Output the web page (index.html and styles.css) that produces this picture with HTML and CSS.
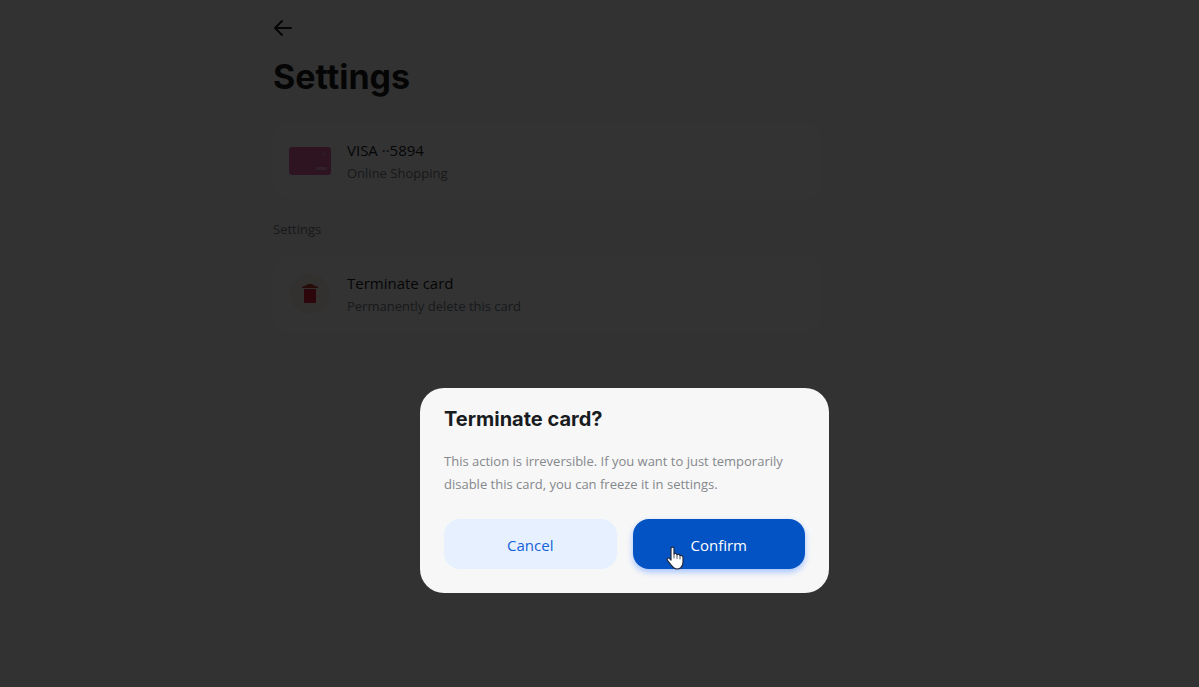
FILE: index.html
```
<!DOCTYPE html>
<html lang="en">
<head>
    <meta charset="UTF-8">
    <meta name="viewport" content="width=device-width, initial-scale=1.0">
    <title>Settings</title>
    <link rel="stylesheet" href="styles.css">
</head>
<body>

    <main class="page">
        <button class="back" type="button" aria-label="Back">
            <svg width="20" height="20" viewBox="0 0 20 20" fill="none" stroke="currentColor" stroke-width="2" stroke-linecap="round" stroke-linejoin="round">
                <path d="M9 3 L2 10 L9 17 M2 10 H18"/>
            </svg>
        </button>
        <h1>Settings</h1>

        <a class="card" href="#">
            <svg class="card-icon" width="42" height="28" viewBox="0 0 42 28">
                <rect width="42" height="28" rx="3" fill="#e0669f"/>
                <circle cx="35" cy="7" r="2" fill="#ea8bb6"/>
                <rect x="27" y="20" width="11" height="3" rx="1" fill="#f3a9ca"/>
            </svg>
            <span class="card-text">
                <span class="card-title">VISA ··5894</span>
                <span class="card-sub">Online Shopping</span>
            </span>
        </a>

        <h2>Settings</h2>

        <button class="card" type="button">
            <svg class="card-icon" width="42" height="40" viewBox="0 0 42 40">
                <circle cx="21" cy="20" r="20" fill="#fdf1f1"/>
                <path d="M13 13 L18 11 L19 10 H23 L24 11 L29 13 V14 H13 Z" fill="#c0392b"/>
                <path d="M15 15 H27 V28 Q27 29 26 29 H16 Q15 29 15 28 Z" fill="#e0203a"/>
            </svg>
            <span class="card-text">
                <span class="card-title">Terminate card</span>
                <span class="card-sub">Permanently delete this card</span>
            </span>
        </button>
    </main>

    <div class="overlay">
        <div class="dialog" role="dialog" aria-modal="true" aria-labelledby="dialogTitle">
            <h3 id="dialogTitle">Terminate card?</h3>
            <p>This action is irreversible. If you want to just temporarily disable this card, you can freeze it in settings.</p>
            <div class="actions">
                <button class="btn btn-cancel" type="button">Cancel</button>
                <button class="btn btn-confirm" type="button">Confirm
                    <svg class="pointer" width="18" height="24" viewBox="0 0 18 24" aria-hidden="true">
                        <path d="M5 2.5 C5 .6 8 .6 8 2.5 V8 C8.6 7.1 10.8 7.3 11 8.7 C11.8 7.9 13.8 8.3 14 9.7 C15 9.1 17 9.6 17 11.4 V16.5 C17 19 16 20.5 14.5 22 C13 23.3 9.5 23.3 8 22 C5.5 20 3.5 17 1.5 14.3 C.3 12.5 2.3 11.3 3.6 12.6 L5 14 Z" fill="#fff" stroke="#222b3d" stroke-width="1.2" stroke-linejoin="round"/>
                        <path d="M8 8 V12 M11 9 V12.5 M14 10 V13" stroke="#222b3d" stroke-width="0.8" stroke-linecap="round"/>
                    </svg>
                </button>
            </div>
        </div>
    </div>

</body>
</html>
```
FILE: styles.css
```
* {
    box-sizing: border-box;
}

body {
    margin: 0;
    background-color: #f7f7f7;
    color: #191c1f;
    font-family: "Open Sans", "Noto Sans", sans-serif;
}

button {
    font-family: inherit;
    border: none;
    cursor: pointer;
}

.page {
    max-width: 821px;
    padding: 18px 0 0 273px;
}

.back {
    display: block;
    height: 20px;
    padding: 0;
    background: none;
    color: #191c1f;
}

h1 {
    margin: 17px 0 24px;
    font-family: Inter, sans-serif;
    font-size: 34px;
    line-height: 44px;
    font-weight: 700;
}

h2 {
    margin: 20px 0 17px;
    color: #75808a;
    font-size: 13px;
    line-height: 20px;
    font-weight: 400;
}

.card {
    display: flex;
    align-items: center;
    gap: 16px;
    width: 100%;
    min-height: 76px;
    padding: 12px 16px;
    border-radius: 16px;
    background-color: #fff;
    color: #191c1f;
    text-align: left;
    text-decoration: none;
}

.card-icon {
    flex-shrink: 0;
}

.card-text {
    display: flex;
    flex-direction: column;
}

.card-title {
    font-size: 15px;
    line-height: 24px;
}

.card-sub {
    color: #75808a;
    font-size: 13px;
    line-height: 22px;
}

.overlay {
    position: fixed;
    inset: 0;
    display: flex;
    align-items: flex-end;
    justify-content: center;
    padding: 0 0 94px 50px;
    background-color: rgba(0, 0, 0, 0.8);
}

.dialog {
    width: 100%;
    max-width: 409px;
    padding: 16px 24px 24px;
    border-radius: 24px;
    background-color: #f7f7f7;
}

.dialog h3 {
    margin: 0 0 16px;
    font-family: Inter, sans-serif;
    font-size: 20px;
    line-height: 30px;
    font-weight: 700;
}

.dialog p {
    margin: 0 0 23px;
    color: #85888c;
    font-size: 13px;
    line-height: 23px;
}

.actions {
    display: flex;
    gap: 16px;
}

.btn {
    position: relative;
    flex: 1;
    height: 50px;
    padding: 2px 6px 0;
    border-radius: 16px;
    font-size: 15px;
}

.btn-cancel {
    background-color: #e6f0fe;
    color: #1463d8;
}

.btn-confirm {
    background-color: #0353c4;
    color: #fff;
    box-shadow: 0 3px 6px #a3c2ff;
}

/* hand cursor lies over the confirm button */
.pointer {
    position: absolute;
    left: 33px;
    top: 27px;
}
```
